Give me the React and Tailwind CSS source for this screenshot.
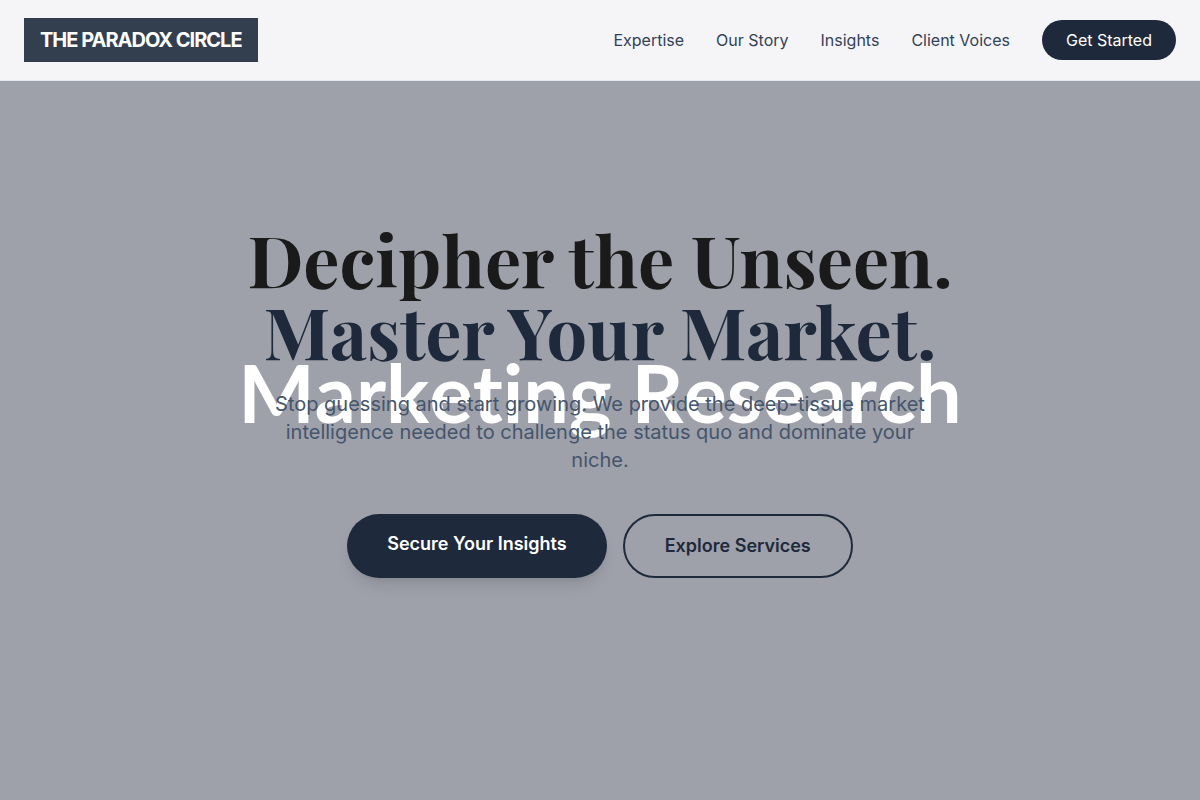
import React from 'react';

const navLinks = [
  { label: 'Expertise', href: '#expertise' },
  { label: 'Our Story', href: '#story' },
  { label: 'Insights', href: '#insights' },
  { label: 'Client Voices', href: '#voices' },
];

const Navbar = () => (
  <nav className="fixed top-0 left-0 right-0 z-50 bg-[#f5f5f8] border-b border-slate-200">
    <div className="h-20 px-6 flex items-center justify-between">
      <a href="#top" className="bg-[#333e4f] px-4 py-2 text-xl font-bold tracking-tighter text-white">
        THE PARADOX CIRCLE
      </a>

      <div className="flex items-center gap-8 text-slate-700">
        {navLinks.map((link) => (
          <a key={link.label} href={link.href} className="hover:text-slate-900 transition-colors">
            {link.label}
          </a>
        ))}
        <a href="#contact" className="bg-[#1e293b] text-white px-6 py-2 rounded-full">
          Get Started
        </a>
      </div>
    </div>
  </nav>
);

const Hero = () => (
  <header id="top" className="relative min-h-screen flex items-center justify-center bg-[#9ea1aa] px-6">
    {/* Backdrop lettering */}
    <div className="absolute inset-0 pb-4 flex items-center justify-center font-['Lato',sans-serif] font-bold text-[81px] [font-variant-ligatures:none] [font-kerning:none] text-white whitespace-nowrap">
      Marketing Research
    </div>

    <div className="relative max-w-4xl text-center">
      <h1 className="mb-6 text-7xl leading-none font-bold text-[#1a1a1a] font-['Playfair_Display','Liberation_Serif',serif]">
        Decipher the Unseen. <br />
        <span className="text-[#1e293b]">Master Your Market.</span>
      </h1>
      <p className="mx-auto mb-10 max-w-2xl text-xl text-slate-600">
        Stop guessing and start growing. We provide the deep-tissue market intelligence needed to
        challenge the status quo and dominate your niche.
      </p>
      <div className="flex justify-center gap-4 text-lg font-semibold">
        <a href="#contact" className="bg-[#1e293b] text-white px-10 py-4 rounded-full shadow-lg">
          Secure Your Insights
        </a>
        <a href="#expertise" className="border-2 border-[#1e293b] text-[#1e293b] px-10 py-4 rounded-full">
          Explore Services
        </a>
      </div>
    </div>
  </header>
);

const App = () => (
  <div className="font-['Inter',sans-serif]">
    <Navbar />
    <Hero />
  </div>
);

export default App;
